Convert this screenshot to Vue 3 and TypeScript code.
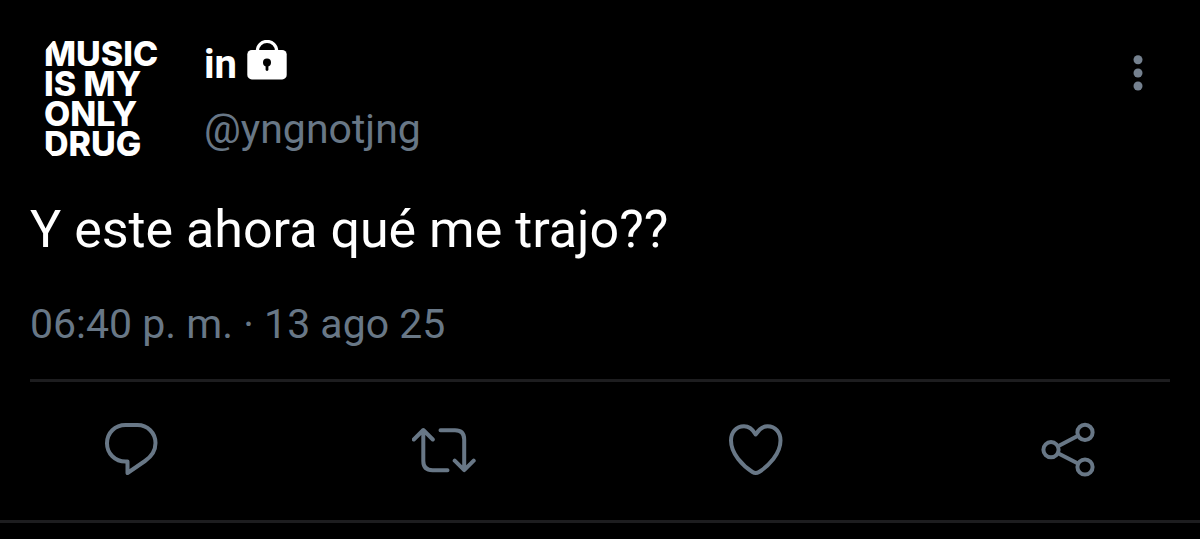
<script setup lang="ts">
interface Action {
  label: string
  paths: string[]
  circles?: { cx: number; cy: number }[]
}

const slogan = 'MUSIC\nIS MY\nONLY\nDRUG'

const actions: Action[] = [
  {
    label: 'Responder',
    paths: [
      'M25.5 7H37.5C47.5 7 55.5 15 55.5 25C55.5 33.5 51.5 38.5 45 43L27.5 55V43.5H25.5C15 43.5 7 35.5 7 25.2S15 7 25.5 7Z',
    ],
  },
  {
    label: 'Retwittear',
    paths: [
      'M1.8 21.5L11.3 12L20.8 21.5M11.3 12V43Q11.3 52.2 20.5 52.2H35.5',
      'M28.5 12.2H43Q52.2 12.2 52.2 21.5V52M42.7 42.7L52.2 52.2L61.7 42.7',
    ],
  },
  {
    label: 'Me gusta',
    paths: [
      'M31.7 16.5C28.5 11 24.5 8.3 20 8.3C12 8.3 7 14.5 7 22.5C7 36 19 48 28.5 54Q31.7 56 35 54C44.5 48 56.5 36 56.5 22.5C56.5 14.5 51.5 8.3 43.5 8.3C39 8.3 35 11 31.7 16.5Z',
    ],
  },
  {
    label: 'Compartir',
    paths: ['M22 28.2L42 17.8M22 35.2L42 45.5'],
    circles: [
      { cx: 15, cy: 31.7 },
      { cx: 49, cy: 14.4 },
      { cx: 49, cy: 49 },
    ],
  },
]
</script>

<template>
  <article class="tweet">
    <header class="head">
      <div class="avatar">
        <div class="slogan">{{ slogan }}</div>
        <svg class="cuts" viewBox="0 0 140 140" aria-hidden="true">
          <path d="M13 12H27L13 29ZM13 122L25 135H13Z" fill="#000" />
        </svg>
      </div>
      <div class="author">
        <div class="name">
          <span>in</span>
          <svg class="lock" viewBox="0 0 40 40" role="img" aria-label="Cuenta protegida">
            <path d="M10.4 12V11A9.6 9.6 0 0 1 29.6 11V12" fill="none" stroke="#fff" stroke-width="3.2" />
            <rect x="0.3" y="10" width="39.4" height="29.4" rx="4.5" fill="#fff" />
            <circle cx="20" cy="22.6" r="4" fill="#000" />
            <path d="M20 23V29.5" stroke="#000" stroke-width="2.8" stroke-linecap="round" />
          </svg>
        </div>
        <a class="handle" href="#">@yngnotjng</a>
      </div>
      <button class="more" type="button" aria-label="Más opciones">
        <svg viewBox="0 0 12 40" aria-hidden="true">
          <circle cx="6" cy="6.7" r="4.5" />
          <circle cx="6" cy="20" r="4.5" />
          <circle cx="6" cy="33" r="4.5" />
        </svg>
      </button>
    </header>
    <p class="text">Y este ahora qué me trajo??</p>
    <time class="date" datetime="2025-08-13T18:40">06:40 p. m. · 13 ago 25</time>
    <footer class="actions">
      <button v-for="action in actions" :key="action.label" class="action" type="button" :aria-label="action.label">
        <svg viewBox="0 0 64 64" aria-hidden="true">
          <path v-for="d in action.paths" :key="d" :d="d" />
          <circle v-for="c in action.circles" :key="c.cy" :cx="c.cx" :cy="c.cy" r="7.6" />
        </svg>
      </button>
    </footer>
  </article>
</template>

<style>
body {
  margin: 0;
  background: #000;
}
</style>

<style scoped>
.tweet {
  padding: 24px 30px 0;
  border-bottom: 3px solid #1d1d1f;
  background: #000;
  color: #fff;
  font-family: Roboto, sans-serif;
}
.head {
  display: flex;
  align-items: flex-start;
}
.avatar {
  position: relative;
  box-sizing: border-box;
  width: 140px;
  height: 140px;
  padding: 15px 0 0 14px;
}
.slogan {
  font: 800 34px/30px Inter, "Liberation Sans", sans-serif;
  white-space: pre;
}
.cuts {
  position: absolute;
  inset: 0;
}
.author {
  flex: 1;
  margin-left: 34px;
  padding-top: 16px;
}
.name {
  display: flex;
  gap: 10px;
  font-size: 40px;
  font-weight: 700;
  line-height: 50px;
}
.lock {
  width: 40px;
  height: 40px;
}
.handle {
  display: block;
  margin-top: 15px;
  color: #687786;
  font-size: 41px;
  line-height: 48px;
  text-decoration: none;
}
.more,
.action {
  display: block;
  padding: 0;
  border: 0;
  background: none;
  cursor: pointer;
}
.more {
  margin: 29px 26px 0 0;
}
.more svg {
  display: block;
  width: 12px;
  height: 40px;
  fill: #75818f;
}
.text {
  margin: 36px 0 0;
  font-size: 52px;
  line-height: 60px;
}
.date {
  display: block;
  margin-top: 40px;
  color: #687786;
  font-size: 41px;
  line-height: 48px;
}
.actions {
  display: flex;
  justify-content: space-between;
  margin-top: 31px;
  padding: 36px 70px 38px;
  border-top: 3px solid #1d1d1f;
}
.action svg {
  display: block;
  width: 64px;
  height: 64px;
  fill: none;
  stroke: #687786;
  stroke-width: 4;
  stroke-linecap: round;
  stroke-linejoin: round;
}
</style>
